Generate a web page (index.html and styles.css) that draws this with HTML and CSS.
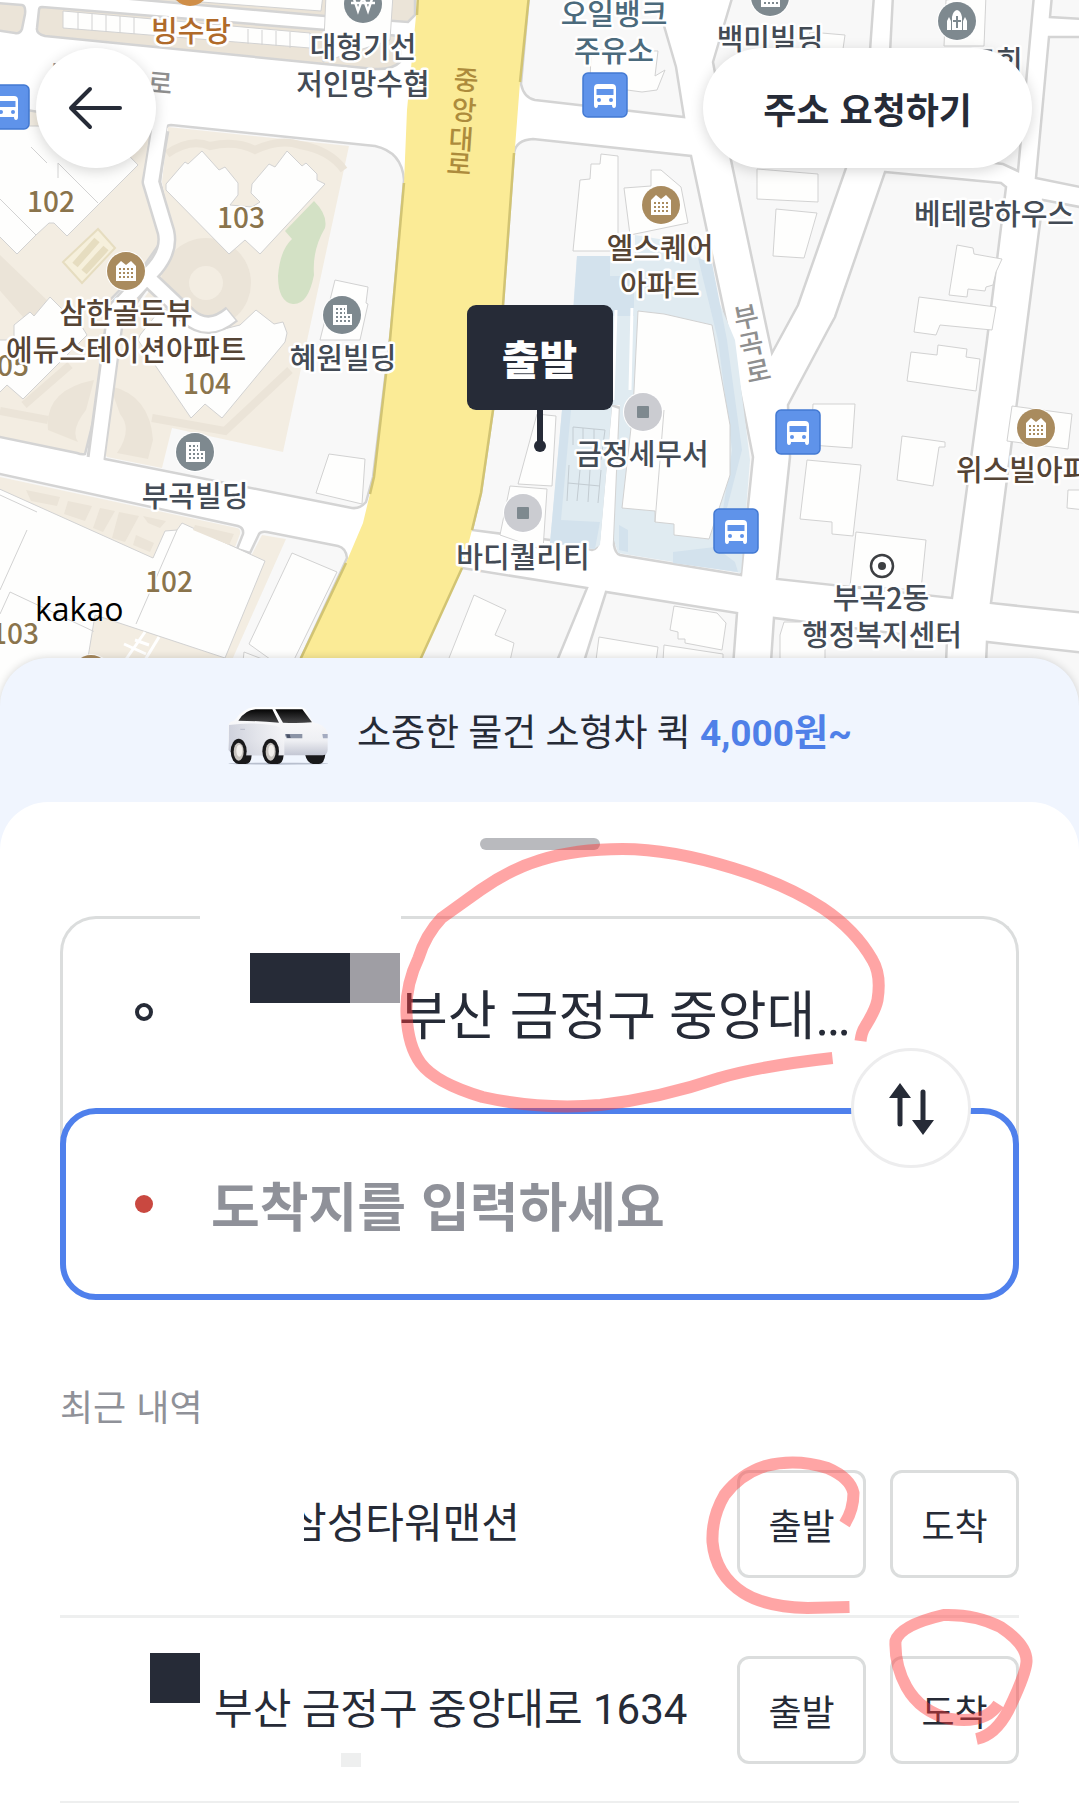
FILE: index.html
```html
<!DOCTYPE html>
<html lang="ko">
<head>
<meta charset="utf-8">
<meta name="viewport" content="width=device-width, initial-scale=1">
<title>출발지 · 도착지 입력</title>
<link rel="stylesheet" href="styles.css">
</head>
<body>
<main class="app">
  <section class="map" aria-label="지도">
    <svg class="map-canvas" viewBox="0 0 1079 706" preserveAspectRatio="xMidYMin slice" aria-hidden="true">
      <defs>
        <g id="bus">
          <rect x="1" y="1" width="44" height="44" rx="5" fill="#5f93ea" stroke="#4379d2" stroke-width="1.500"/>
          <path d="M12 33V16q0-4 4-4h14q4 0 4 4v17q0 3-2 3t-2-3H16q0 3-2 3t-2-3z" fill="#fff"/>
          <path d="M14.500 17h17v6h-17z" fill="#5f93ea"/>
          <circle cx="17" cy="28" r="2" fill="#5f93ea"/><circle cx="29" cy="28" r="2" fill="#5f93ea"/>
        </g>
        <g id="apartment">
          <circle r="20" fill="#fff"/><circle r="19" fill="#a98b5e"/>
          <path d="M-10-5l5-5 5 4 5-4 5 5V10H-10z" fill="#fff"/>
          <path d="M-7-2H8M-7 2H8M-7 6H8" stroke="#a98b5e" stroke-width="2" stroke-dasharray="2 2"/>
        </g>
        <g id="building">
          <circle r="20" fill="#fff"/><circle r="19" fill="#7e898f"/>
          <path d="M-9-10H5V-1H10V10H-9z" fill="#fff"/>
          <path d="M-6-6H3M-6-2H3M-6 2H8M-6 6H8" stroke="#7e898f" stroke-width="2" stroke-dasharray="2 2"/>
        </g>
        <g id="place">
          <circle r="20" fill="#fff"/><circle r="19" fill="#cbccd1"/>
          <rect x="-6" y="-6" width="12" height="12" rx="1" fill="#7e898f"/>
        </g>
      </defs>

      <rect width="1079" height="706" fill="#fff"/>

      <!-- city blocks -->
      <g class="block">
        <path class="sand-deep" d="M-5 3L22 5Q26 6 25 14L22 29Q20 34 15 33L-5 30z"/>
        <path class="sand-deep" d="M86-5L325 16 408 22 415 15V-5z"/>
        <path class="sand-deep" d="M42 7L400 36V62Q392 70 375 69L45 36Q36 34 37 28L39 10Q39 7 42 7z"/>
        <path class="sand" d="M-5 105L151 130 145 182 158 230 160 243 146 263 110 300 96 410 85 454Q82 455 77 453L-5 436z"/>
        <path d="M166 128Q167 125 171 125L375 146Q402 152 404 180L391 330 373 477 366 502Q360 509 352 508L105 459Q98 457 99 448L112 340 152 280 162 265 172 243 171 220 160 182z"/>
        <path d="M-5 473L238 526Q244 528 243 534L237 549 250 553 259 534Q261 531 267 532L338 546Q346 548 347 558L301 658 290 706H-5z"/>
        <path d="M529-5L521 84Q524 98 535 100L684 117 676 67 655-5z"/>
        <path d="M533 139Q516 140 514 153L503 305 493 410 481 493 472 530 550 540 592 550Q598 549 599 540L611 405 620 408 614 545Q615 553 620 555L741 575 753 457 727 325 691 156z"/>
        <path d="M733-5L713 62 731 160 772 353 798 305 846 168 870 50 874-5z"/>
        <path d="M893-5L885 150 1003 164 1018 171 1034-5z"/>
        <path d="M1052-5L1050 17 1085 19V-5z"/>
        <path d="M1085 37L1049 37 1036 178 1085 188z"/>
        <path d="M885 172L1001 183 1006 187 987 340 952 598 777 579 790 457 788 405 829 328 835 317z"/>
        <path d="M1085 208L1043 200 1025 340 991 603 1085 613z"/>
        <path d="M462 568L587 588 545 690H400z"/>
        <path d="M570 706L606 592 737 613 730 706z"/>
        <path d="M768 706L774 618 947 640 944 706z"/>
        <path d="M984 706L987 642 1085 653V706z"/>
      </g>

      <!-- apartment grounds -->
      <path class="sand" d="M168 127L349 146 283 452 172 428 162 468 107 457 101 448 113 342 164 270 173 240 162 182z"/>
      <path class="sand" d="M-5 476L237 528Q241 529 240 534L234 550 251 556 262 535 286 539 232 660 212 706H-5z"/>
      <path d="M167 154Q190 138 210 146Q236 140 255 150Q280 138 300 145Q330 150 344 170" class="garden-path"/>
      <circle cx="206" cy="283" r="45" class="sand-deep"/><circle cx="206" cy="283" r="17" class="sand"/>
      <path class="sand-deep" d="M0 255L50 303 30 325-5 285zM110 386Q150 395 153 440L148 459 117 453Q133 430 120 414zM48 430Q44 390 94 380L86 410Q70 430 78 442z"/>
      <path class="garden-path" d="M152 418L225 431 290 370M0 411L48 420M24 405L70 365"/>
      <path fill="#d3e1c5" d="M314 201Q328 215 325 228Q312 250 314 275Q308 305 293 304Q278 302 278 276Q280 250 292 239L285 231z"/>
      <g fill="none" stroke="#e6ddc0" stroke-width="2"><path fill="#f6f0dc" d="M98 229L115 248 82 283 63 262z"/><path stroke-width="7" d="M75 265L97 240M84 272L106 248"/></g>

      <!-- office grounds -->
      <path fill="#e0ebf1" d="M577 256H635V235L695 245 735 340 750 460 741 573 618 553 614 540 620 405 612 405 600 545 594 549 550 543 562 410 573 310z"/>
      <path fill="#d3e2ed" d="M577 256H610V276H634V316H573zM698 258L718 340 732 450 723 510 727 508 742 450 727 340 712 263zM562 410H571L561 520 600 522 595 549 550 543zM619 525L628 530V552L619 550zM673 552L715 547 735 562 738 572 673 563z"/>

      <!-- building footprints -->
      <g class="house">
        <path d="M175 0L321 11 323-5H175zM326-5L323 62 390 40 393-5z"/>
        <path d="M63 11L310 33V48L63 28zM78 12V30M92 13V31M106 15V32M120 16V33M134 17V34M248 29V44M262 30V45M276 31V46M290 32V48"/>
        <path d="M166 184L185 162 188 164 202 151 219 170 225 167 238 183 238 195 230 205 252 207 260 202 251 193 252 184 269 164 275 167 287 151 302 166 306 163 317 174 317 180 325 184 260 254 245 240 229 254 166 190z"/>
        <path d="M-5 126H100L138 165 67 236 54 223H49L36 235 17 254-5 232z"/>
        <path class="seam" d="M0 199L36 235M31 147L47 163M98 203L58 163V178"/>
        <path d="M14 340V325L30 312 34 316 50 297 68 315 73 312 87 335 23 399 7 385-5 397V340zM140 335L160 310H185L220 330 240 325 256 310 274 324 283 322 287 333 285 342 222 418 205 404 191 418 138 340z"/>
        <path d="M335 280L368 287 366 303 368 304 360 340H320zM329 454L365 459 362 504 316 493z"/>
        <path d="M-5 487L153 558 165 531 177 530 182 523 265 561 225 658 95 615 80 706H-5z"/>
        <path class="seam" d="M0 495L37 512M27 530L0 590M177 530L136 624M10 592L95 632M10 592L0 614"/>
        <path d="M292 553L337 572 288 672 249 644zM244 652L270 662 260 690H240z"/>
        <path d="M601 154L618 156V251L573 251 580 180 590 179 591 164 600 164zM651 170H661L681 187 688 223 630 235 624 188 651 186z"/>
        <path d="M665 70L657 90 642 92 590 85 591 50 658 51 655 76z"/>
        <path d="M757 169L818 174V202L757 199zM776 209L817 213 804 258 773 256zM810 32L845 35 840 70H800z"/>
        <path d="M946 0L944 46H984L986-5zM957 245L973 248 974 254 1002 259 996 272 993 285 986 287 985 291 968 289 967 297 949 295zM919 297L996 307 992 330 940 325 936 335 914 332z"/>
        <path d="M911 352L937 355 938 345 967 349 966 357 980 359 976 391 907 381zM813 404H855L852 448 811 445zM807 460L861 465 853 536 832 534V522L800 519zM902 436L945 442V447H939L933 486 897 480z"/>
        <path d="M1012 406L1072 414 1068 449 1007 441zM1068 490H1085V510L1067 508zM856 532L926 540 921 590 850 586z"/>
        <path d="M638 311L664 314 712 325 730 425V475L709 539 674 535V524L655 522V511L622 508 633 410zM655 522L664 410"/>
        <path d="M537 414L556 416 552 486 518 484zM510 486L547 489 543 550 500 535z"/>
        <path d="M474 595L506 610 495 635 514 643 500 706H430z"/>
        <path d="M674 606L717 613 726 623 722 650 685 643V639H678V632L670 630zM599 637L658 647 650 706H590zM664 645L723 654V706H660zM784 622H825V706H780V635z"/>
      </g>
      <path class="sand" d="M96 619L220 668 212 706H80z"/>
      <path class="driveway-edge" d="M160 130L151 182 166 232Q170 250 155 268L116 310 96 458M150 280L188 316Q208 334 232 314"/>
      <path class="driveway" d="M161 118L151 182 166 232Q170 250 155 268L116 310 95 470M150 280L188 316Q208 334 231 315"/>
      <g class="parking"><path d="M573 445V427L605 430 601 460M583 428V445M594 429V446M568 483L600 486M569 465L567 501M580 470L577 501M590 470L588 502M601 470L598 503"/></g>
      <path d="M616 310L613 400M632 308L630 390" stroke="#fff" stroke-width="3"/>
      <g class="sand-deep"><path d="M26 490L60 497 57 506 31 501zM68 501L92 506 85 521 64 514zM100 508L115 511 103 532 93 528zM119 512L139 516 125 542 112 538zM143 516L166 521 160 528 148 523zM136 535L154 543 150 552 133 545zM195 525L234 534 229 545 193 530z"/></g>
      <path d="M145 632L122 665M159 637L142 665M124 644L146 654M135 640L149 645" stroke="#fff" stroke-width="3"/>

      <!-- main road -->
      <path fill="#fbeb96" d="M418-5L407 110 404 183 390 340 374 477 363 523 346 563 301 658 280 706H401L421 658 462 568 472 530 481 493 493 410 503 305 520 82 529-5z"/>
      <path fill="none" stroke="#d2c473" stroke-width="2.500" d="M418-5L417 15M404 183L390 340 374 477 370 494M346 563L301 658 280 706M529-5L520 82M514 153L503 305 493 410 481 493 472 530M462 568L421 658 401 706"/>

      <use href="#apartment" x="126" y="271"/><use href="#apartment" x="661" y="205"/>
      <use href="#apartment" x="1036" y="428"/><use href="#apartment" x="91" y="674"/>
      <use href="#building" x="342" y="315"/><use href="#building" x="195" y="452"/><use href="#building" x="770" y="-3"/>
      <use href="#place" x="523" y="513"/><use href="#place" x="643" y="412"/>
      <circle cx="190" cy="-13" r="19" fill="#cf8e48"/>
      <circle cx="957" cy="21" r="20" fill="#fff"/><circle cx="957" cy="21" r="19" fill="#7e898f"/>
      <path fill="#fff" d="M947 30V21l2-4 2 4v9zM963 30V21l2-4 2 4v9zM952 30V17q1-6 5-7 4 1 5 7V30z"/>
      <path d="M957 16V28M953 21H961" stroke="#7e898f" stroke-width="2"/>
      <circle cx="363" cy="4" r="19" fill="#7e898f"/>
      <path d="M353-4l5 15 5-14 5 14 5-15M351 3h24" fill="none" stroke="#fff" stroke-width="2.500"/>
      <use href="#bus" x="-16" y="84"/><use href="#bus" x="582" y="72"/><use href="#bus" x="775" y="409"/><use href="#bus" x="713" y="508"/>
      <circle cx="882" cy="566" r="11" fill="#fff" stroke="#3d3f42" stroke-width="2.500"/><circle cx="882" cy="566" r="4" fill="#3d3f42"/>

      <g class="road-name">
        <text x="61" y="85" transform="rotate(5 61 75)">부</text>
        <text x="160" y="93" transform="rotate(5 160 83)">로</text>
        <text x="746" y="327" transform="rotate(-12 746 317)">부</text>
        <text x="751" y="354" transform="rotate(-12 751 344)">곡</text>
        <text x="758" y="381" transform="rotate(-12 758 371)">로</text>
      </g>
      <g class="road-name avenue">
        <text x="466" y="90" transform="rotate(4 466 80)">중</text>
        <text x="464" y="120" transform="rotate(4 464 110)">앙</text>
        <text x="461" y="149" transform="rotate(4 461 139)">대</text>
        <text x="459" y="174" transform="rotate(4 459 164)">로</text>
      </g>
      <g class="poi number">
        <text x="51" y="212">102</text><text x="241" y="228">103</text><text x="5" y="376">105</text>
        <text x="207" y="394">104</text><text x="169" y="592">102</text><text x="15" y="644">103</text>
      </g>
      <g class="poi">
        <text class="food" x="191" y="42">빙수당</text>
        <text x="363" y="58">대형기선</text><text x="363" y="95">저인망수협</text>
        <text class="fuel" x="614" y="25">오일뱅크</text><text class="fuel" x="614" y="62">주유소</text>
        <text x="770" y="50">백미빌딩</text><text x="996" y="72">교회</text>
        <text x="994" y="225">베테랑하우스</text>
        <text class="home" x="660" y="259">엘스퀘어</text><text class="home" x="660" y="296">아파트</text>
        <text class="home" x="126" y="324">삼한골든뷰</text><text class="home" x="126" y="361">에듀스테이션아파트</text>
        <text x="343" y="369">혜원빌딩</text><text x="195" y="507">부곡빌딩</text>
        <text x="523" y="568">바디퀄리티</text><text x="642" y="465">금정세무서</text>
        <text class="home" x="1036" y="481">위스빌아파트</text>
        <text x="881" y="609">부곡2동</text><text x="882" y="646">행정복지센터</text>
      </g>
      <text class="brand" x="35" y="621">kakao</text>
    </svg>

    <header class="map-bar">
      <button class="back" type="button" aria-label="뒤로">
        <svg width="56" height="44" viewBox="0 0 56 44" aria-hidden="true"><path d="M52 22H4M22 3L3 22 22 41" fill="none" stroke="#262b37" stroke-width="4" stroke-linecap="round" stroke-linejoin="round"/></svg>
      </button>
      <button class="request" type="button">주소 요청하기</button>
    </header>

    <div class="pin">
      <span class="pin-label">출발</span>
      <svg width="12" height="42" viewBox="0 0 12 42" aria-hidden="true"><path d="M3 0H9V36H3z" fill="#262b37"/><circle cx="6" cy="36" r="6" fill="#262b37"/></svg>
    </div>
  </section>

  <section class="promo">
    <svg class="car" viewBox="24 30 306 180" aria-hidden="true">
      <defs>
        <linearGradient id="body" x1="0" y1="0" x2="0" y2="1"><stop offset="0" stop-color="#fff"/><stop offset=".7" stop-color="#eeeff3"/><stop offset="1" stop-color="#c3c6d3"/></linearGradient>
        <linearGradient id="side" x1="0" y1="0" x2="1" y2="0"><stop offset="0" stop-color="#c6c9d6"/><stop offset=".5" stop-color="#dfe1e8"/><stop offset="1" stop-color="#f4f4f7"/></linearGradient>
        <linearGradient id="glass" x1="0" y1="0" x2="0" y2="1"><stop offset="0" stop-color="#050505"/><stop offset="1" stop-color="#454547"/></linearGradient>
      </defs>
      <ellipse cx="178" cy="206" rx="150" ry="3" fill="#b8bfce"/>
      <path d="M60 180H98Q97 206 80 207H60zM155 180H194Q192 206 176 207H155zM258 178H319Q316 207 300 207H282Q264 205 258 178z" fill="#19191b"/>
      <path d="M28 165V92Q29 80 45 77Q70 42 105 36H240Q258 37 263 48L282 82Q322 90 326 115V165Q325 180 312 181H75L36 172z" fill="url(#body)"/>
      <path d="M30 90Q100 80 170 92Q196 100 196 130V181H75L30 168z" fill="url(#side)" opacity=".8"/>
      <path d="M58 77Q78 45 110 43H160L180 83Q120 78 58 77zM169 43H250L279 82Q240 85 192 83z" fill="url(#glass)"/>
      <path d="M198 117H250V130H203Q198 124 198 117z" fill="#8b93a5"/><path d="M201 118H212L215 129H205z" fill="#4b5368"/>
      <path d="M310 117H326V130H312z" fill="#a4abc0"/><path d="M64 103H78" stroke="#a8acbd" stroke-width="2"/>
      <ellipse cx="59" cy="169" rx="24" ry="38" fill="#19191b"/><ellipse cx="59" cy="170" rx="15" ry="27" fill="#c8c4c0"/><ellipse cx="61" cy="167" rx="9" ry="18" fill="#f1eeeb"/>
      <ellipse cx="155" cy="169" rx="25" ry="38" fill="#19191b"/><ellipse cx="155" cy="170" rx="15" ry="27" fill="#c8c4c0"/><ellipse cx="157" cy="167" rx="9" ry="18" fill="#f1eeeb"/>
    </svg>
    <p class="promo-text">소중한 물건 소형차 퀵 <strong>4,000원~</strong></p>
  </section>

  <section class="sheet">
    <div class="handle"></div>

    <form class="route">
      <div class="field origin">
        <span class="dot hollow"></span>
        <span class="mask mask-origin"><i></i></span>
        <input class="field-input" type="text" aria-label="출발지" value="부산 금정구 중앙대…">
      </div>
      <div class="field destination">
        <span class="dot"></span>
        <input class="field-input" type="text" aria-label="도착지" placeholder="도착지를 입력하세요">
      </div>
      <button class="swap" type="button" aria-label="출발지와 도착지 바꾸기">
        <svg width="48" height="54" viewBox="0 0 48 54" aria-hidden="true"><path d="M13 12V43M36 11V42" stroke="#262b37" stroke-width="5" stroke-linecap="round"/><path d="M13 2L24 17H2zM36 54L25 39H47z" fill="#262b37"/></svg>
      </button>
    </form>

    <h2 class="recent-title">최근 내역</h2>
    <ul class="recent">
      <li class="recent-row">
        <span class="place place-tower">삼성타워맨션</span>
        <button class="pick" type="button">출발</button>
        <button class="pick" type="button">도착</button>
      </li>
      <li class="recent-row">
        <span class="mask mask-square"></span>
        <span class="place place-road">부산 금정구 중앙대로 1634<i class="mask mask-small"></i></span>
        <button class="pick" type="button">출발</button>
        <button class="pick" type="button">도착</button>
      </li>
    </ul>

    <svg class="marker" width="1079" height="1001" viewBox="0 802 1079 1001" aria-hidden="true">
      <path d="M860 1041Q861 1032 865 1026Q875 1010 877 1000Q881 975 872 960Q855 930 822 908Q785 884 732 868Q670 849 622 849Q575 849 540 860Q510 869 480 890L441 918Q425 935 418 958Q405 985 406 1013Q407 1045 420 1063Q435 1083 482 1097Q540 1110 600 1105Q660 1098 719 1078Q760 1066 832 1058"/>
      <path d="M844 1524Q853 1510 853 1493Q850 1478 827 1468Q795 1458 765 1466Q740 1474 724 1495Q711 1517 712 1542Q715 1575 743 1593Q765 1607 807 1608L849 1607"/>
      <path d="M998 1704Q985 1724 950 1719Q920 1712 906 1687Q894 1665 895 1641Q900 1625 943 1615Q975 1614 1000 1627Q1027 1645 1026 1662Q1025 1675 1008 1710Q995 1735 976 1739"/>
    </svg>
  </section>
</main>
</body>
</html>
```
FILE: styles.css
```css
* { box-sizing: border-box; }

body {
  margin: 0;
  background: #fff;
  color: #262b37;
  font-family: "Noto Sans CJK KR", sans-serif;
}

button, input { font: inherit; color: inherit; }
button { padding: 0; cursor: pointer; }

.app {
  position: relative;
  min-height: 100vh;
  overflow: hidden;
}

/* Map */
.map { position: relative; height: 658px; }
.map-canvas { display: block; width: 100%; height: 706px; }

.block path { fill: #f8f8f8; stroke: #d4d4d4; stroke-width: 2.500; }
.block .sand, .sand { fill: #f3ede2; }
.block .sand-deep, .sand-deep { fill: #ebe4d8; }
.garden-path { fill: none; stroke: #ebe4d8; stroke-width: 8; }
.driveway-edge { fill: none; stroke: #d4d4d4; stroke-width: 19; stroke-linejoin: round; }
.driveway { fill: none; stroke: #fff; stroke-width: 14; stroke-linejoin: round; }
.house path { fill: #fefefd; stroke: #d2d2d2; stroke-width: 1; }
.house .seam { fill: none; }
.parking path { fill: none; stroke: #c3ccd2; stroke-width: 1; }

.poi, .road-name, .brand {
  text-anchor: middle;
  paint-order: stroke;
  stroke: #fff;
  stroke-width: 5;
  stroke-linejoin: round;
}
.poi { font-size: 29px; font-weight: 500; fill: #434b55; }
.poi .food { fill: #b06a2a; }
.poi .fuel { fill: #4b6a7c; }
.poi .home { fill: #554435; }
.number { font-size: 28px; fill: #8a744c; stroke-width: 3; }
.road-name { font-size: 27px; font-weight: 500; fill: #8f8f8f; stroke-width: 2; }
.avenue { fill: #ad8b3c; stroke: none; }
.brand {
  font-family: "Open Sans", sans-serif;
  font-size: 32px;
  text-anchor: start;
  fill: #000;
  stroke: none;
}

.map-bar {
  position: absolute;
  inset: 48px 47px auto 36px;
  display: flex;
  justify-content: space-between;
}
.back, .request {
  display: flex;
  align-items: center;
  justify-content: center;
  height: 120px;
  border: 0;
  border-radius: 60px;
  background: #fff;
  box-shadow: 0 3px 14px rgb(0 0 0 / 16%);
}
.back { width: 120px; }
.request { padding: 0 60px; font-size: 36px; font-weight: 700; }

.pin {
  position: absolute;
  top: 305px;
  left: 50%;
  display: flex;
  flex-direction: column;
  align-items: center;
  transform: translateX(-50%);
}
.pin-label {
  width: 146px;
  border-radius: 9px;
  background: #262b37;
  color: #fff;
  font-size: 41px;
  font-weight: 900;
  line-height: 105px;
  text-align: center;
}

/* Promotion */
.promo {
  position: relative;
  display: flex;
  align-items: center;
  justify-content: center;
  gap: 28px;
  height: 192px;
  padding-bottom: 48px;
  border-radius: 48px 48px 0 0;
  background: #f0f5fe;
  box-shadow: 0 0 8px rgb(0 0 0 / 16%);
}
.car { width: 102px; height: 60px; margin-top: 10px; }
.promo-text {
  margin: 0;
  font-family: Roboto, "Noto Sans CJK KR", sans-serif;
  font-size: 37px;
}
.promo-text strong { color: #4f80e8; }

/* Sheet */
.sheet {
  position: relative;
  margin-top: -48px;
  padding: 36px 60px 0;
  border-radius: 48px 48px 0 0;
  background: #fff;
}
.handle {
  width: 120px;
  height: 12px;
  margin: 0 auto 66px;
  border-radius: 6px;
  background: #b9babe;
}

.route { position: relative; }
.field {
  position: relative;
  display: flex;
  align-items: center;
  height: 192px;
  background: #fff;
}
.origin {
  height: 228px;
  margin-bottom: -36px;
  padding: 0 156px 39px 72px;
  border: 3px solid #dbdddd;
  border-bottom: 0;
  border-radius: 36px 36px 0 0;
}
.destination {
  padding: 0 160px 0 69px;
  border: 6px solid #4f80ec;
  border-radius: 36px;
}
.dot {
  flex: none;
  width: 18px;
  height: 18px;
  border-radius: 50%;
  background: #c94840;
}
.hollow { border: 4px solid #262b37; background: #fff; }
.field-input {
  flex: 1;
  min-width: 0;
  height: 90px;
  padding: 0;
  border: 0;
  outline: 0;
  background: none;
  font-size: 53px;
}
.origin .field-input {
  margin-left: -2px;
  font-family: Roboto, "Noto Sans CJK KR", sans-serif;
}
.destination .field-input { margin-left: 58px; font-weight: 700; }
.field-input::placeholder { color: #8f9199; opacity: 1; }

.mask { flex: none; display: block; background: #262b37; }
.mask-origin {
  align-self: flex-start;
  width: 201px;
  height: 180px;
  margin: -3px 0 0 47px;
  padding: 37px 0 0 50px;
  background: #fff;
}
.mask-origin i {
  display: block;
  width: 150px;
  height: 50px;
  border-right: 50px solid #9f9ea4;
  background: #262b37;
}

.swap {
  position: absolute;
  top: 132px;
  right: 48px;
  display: flex;
  align-items: center;
  justify-content: center;
  width: 120px;
  height: 120px;
  border: 3px solid #ededee;
  border-radius: 50%;
  background: #fff;
}

/* Recent places */
.recent-title {
  margin: 81px 0 3px;
  color: #8f9198;
  font-size: 36px;
  font-weight: 400;
  line-height: 48px;
}
.recent { margin: 0; padding: 0; list-style: none; }
.recent-row {
  display: flex;
  align-items: center;
  gap: 24px;
  height: 186px;
  border-bottom: 3px solid #eeefef;
}
.place {
  position: relative;
  flex: 1;
  font-family: Roboto, "Noto Sans CJK KR", sans-serif;
  font-size: 42px;
  line-height: 60px;
  white-space: nowrap;
}
.place-tower { margin-left: 228px; clip-path: inset(0 0 0 16px); }
.place-road { margin-left: -10px; }
.mask-square { width: 50px; height: 50px; margin: -64px 0 0 90px; }
.mask-small {
  position: absolute;
  bottom: -27px;
  left: 127px;
  width: 20px;
  height: 14px;
  background: #eeefef;
}
.pick {
  flex: none;
  width: 129px;
  height: 108px;
  border: 3px solid #dbdddd;
  border-radius: 12px;
  background: #fff;
  font-size: 36px;
}

/* Hand-drawn highlights */
.marker {
  position: absolute;
  top: 0;
  left: 50%;
  transform: translateX(-50%);
  pointer-events: none;
}
.marker path {
  fill: none;
  stroke: rgb(255 55 55 / 45%);
  stroke-width: 12;
  stroke-linejoin: round;
}
```
